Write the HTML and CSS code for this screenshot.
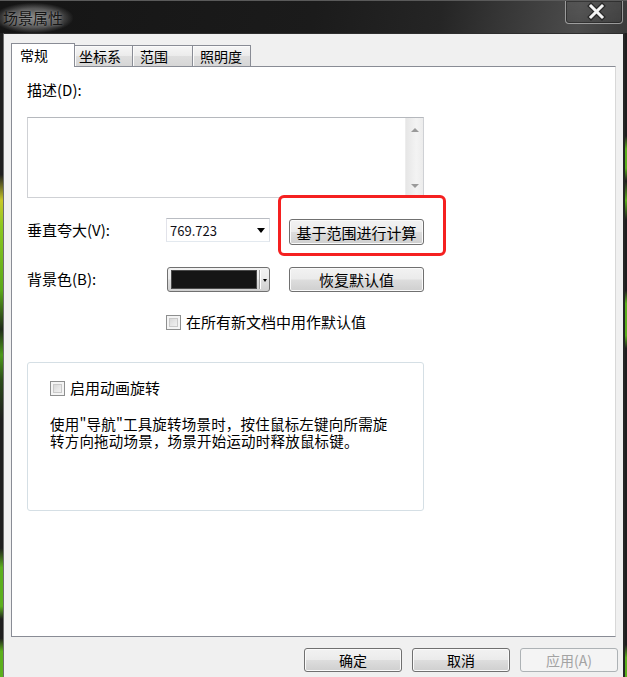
FILE: index.html
```html
<!DOCTYPE html>
<html lang="zh-CN">
<head>
<meta charset="utf-8">
<title>场景属性</title>
<link rel="stylesheet" href="styles.css">
</head>
<body>
<div class="window">
  <div class="titlebar">
    <span class="title">场景属性</span>
    <div class="close">
      <svg width="58" height="23" viewBox="0 0 58 23">
        <path d="M25 5 L36 16 M36 5 L25 16" stroke="#2a2a2a" stroke-width="5.5" stroke-linecap="square"/>
        <path d="M25 5 L36 16 M36 5 L25 16" stroke="#f4f4f4" stroke-width="3" stroke-linecap="square"/>
      </svg>
    </div>
  </div>
  <div class="main">
    <div class="edge-left"></div>
    <div class="client">
      <div class="tabs">
        <div class="tab active">常规</div>
        <div class="tab t2">坐标系</div>
        <div class="tab t3">范围</div>
        <div class="tab t4">照明度</div>
      </div>
      <div class="panel">
        <div class="label desc">描述(D):</div>
        <div class="textarea">
          <div class="scroll"><span class="up"></span><span class="down"></span></div>
        </div>
        <div class="row row1">
          <div class="label">垂直夸大(V):</div>
          <div class="combo"><span class="value">769.723</span><span class="arrow"></span></div>
          <div class="btn-wrap first">
            <div class="btn tall">基于范围进行计算</div>
            <div class="highlight"></div>
          </div>
        </div>
        <div class="row row2">
          <div class="label">背景色(B):</div>
          <div class="colorcombo"><span class="swatch"></span><span class="sep"></span><span class="mini-arrow"></span></div>
          <div class="btn-wrap">
            <div class="btn">恢复默认值</div>
          </div>
        </div>
        <div class="check row3"><span class="cb"></span><span>在所有新文档中用作默认值</span></div>
        <div class="group">
          <div class="check"><span class="cb"></span><span>启用动画旋转</span></div>
          <div class="hint">
            <div class="hint-line">使用"导航"工具旋转场景时，按住鼠标左键向所需旋</div>
            <div class="hint-line">转方向拖动场景，场景开始运动时释放鼠标键。</div>
          </div>
        </div>
      </div>
      <div class="footer">
        <div class="fbtn">确定</div>
        <div class="fbtn">取消</div>
        <div class="fbtn disabled">应用(A)</div>
      </div>
    </div>
    <div class="edge-right"></div>
  </div>
</div>
</body>
</html>
```

FILE: styles.css
```css
* { box-sizing: border-box; }
html, body { margin: 0; padding: 0; }
body {
  width: 627px;
  height: 677px;
  overflow: hidden;
  background: #1e1e1e;
  font-family: "Noto Sans CJK SC", "Noto Sans", sans-serif;
  color: #000;
}
.window { display: flex; flex-direction: column; height: 677px; }

.titlebar {
  height: 33px;
  flex: none;
  display: flex;
  align-items: flex-start;
  border-top: 1px solid #5a5a5a;
  background: linear-gradient(100deg, #151515 0%, #1b1b1b 50%, #252525 70%, #3a3a3a 82%, #4c4c4c 92%, #3a3a3a 100%);
}
.title {
  margin: 2px 0 0 -6px;
  padding: 5px 10px 5px 9px;
  font-size: 15px;
  line-height: 20px;
  color: #151515;
  background: radial-gradient(ellipse at center, rgba(170,170,170,.75) 0%, rgba(140,140,140,.55) 45%, rgba(100,100,100,0) 72%);
  text-shadow: 0 0 3px rgba(255,255,255,.35);
}
.close {
  margin-left: auto;
  margin-right: 4px;
  width: 58px;
  height: 23px;
  border: 1px solid rgba(190,190,190,.7);
  border-top: none;
  border-radius: 0 0 4px 4px;
  background: linear-gradient(rgba(255,255,255,.06), rgba(255,255,255,.02));
  box-shadow: inset 0 0 0 1px rgba(0,0,0,.35);
}
.close svg { display: block; }

.main { flex: 1; display: flex; min-height: 0; }
.edge-left {
  width: 3px;
  background: linear-gradient(#1e1e1e 0%, #1e1e1e 22%, #c8c828 26%, #8cc820 30%, #5aa818 40%, #1e2a18 46%, #4c9a1a 50%, #2a4a18 54%, #1e1e1e 60%, #1e1e1e 80%, #5cb01c 83%, #5cb01c 89%, #1e1e1e 91%, #1e1e1e 94%, #5cb01c 96%);
}
.edge-right {
  width: 2px;
  background: linear-gradient(#1e1e1e 0%, #1e1e1e 16%, #5cb01c 18%, #5cb01c 21%, #1e1e1e 23%, #5cb01c 26%, #1e1e1e 29%, #1e1e1e 40%, #5cb01c 42%, #5cb01c 47%, #1e1e1e 49%, #1e1e1e 95%, #5cb01c 97%);
}
.client {
  flex: 1;
  display: flex;
  flex-direction: column;
  background: #f0f0f0;
  border-left: 1px solid #6e6e6e;
  border-right: 2px solid #262626;
  border-top: 1px solid #2e2e2e;
  padding: 9px 7px 5px 7px;
}

.tabs {
  display: flex;
  align-items: flex-end;
  height: 24px;
  margin-bottom: -1px;
  position: relative;
  z-index: 1;
  flex: none;
}
.tab {
  height: 21px;
  margin-bottom: 1px;
  margin-left: -1px;
  border: 1px solid #898c95;
  border-bottom: none;
  padding-left: 6px;
  font-size: 14px;
  line-height: 20px;
  white-space: nowrap;
  background: linear-gradient(#f6f6f6, #ebebeb 50%, #dedede 52%, #d6d6d6);
  box-shadow: inset 1px 1px 0 #fbfbfb;
}
.tab.active {
  width: 64px;
  height: 24px;
  margin: 0;
  padding-left: 8px;
  line-height: 22px;
  background: #fff;
  box-shadow: none;
}
.t2 { width: 59px; padding-left: 4px; }
.t3 { width: 61px; padding-left: 7px; }
.t4 { width: 59px; padding-left: 7px; }

.panel {
  flex: 1;
  background: #fff;
  border: 1px solid #898c95;
  border-right-color: #d8d8d8;
  padding: 13px 0 0 15px;
  display: flex;
  flex-direction: column;
  align-items: flex-start;
}
.label { font-size: 15px; line-height: 20px; white-space: nowrap; }
.desc { height: 20px; }

.textarea {
  margin-top: 17px;
  width: 397px;
  height: 81px;
  border: 1px solid #cfd1d5;
  border-top-color: #b5b8bd;
  display: flex;
  justify-content: flex-end;
}
.scroll {
  width: 18px;
  height: 100%;
  background: linear-gradient(to right, #e6e6e6, #f3f3f3 60%, #ececec);
  border-left: 1px solid #ededed;
  display: flex;
  flex-direction: column;
  justify-content: space-between;
  align-items: center;
  padding: 10px 0 9px;
}
.up { width: 0; height: 0; border: solid transparent; border-width: 0 4px 4px; border-bottom-color: #9a9a9a; }
.down { width: 0; height: 0; border: solid transparent; border-width: 4px 4px 0; border-top-color: #9a9a9a; }

.row { display: flex; align-items: flex-start; }
.row .label { width: 139px; line-height: 24px; }
.row1 { margin-top: 20px; }
.row2 { margin-top: 22px; }

.combo {
  width: 104px;
  height: 24px;
  border: 1px solid #abadb3;
  border-color: #b9bcc2 #dbdfe6 #e3e9ef #e2e3ea;
  background: #fff;
  display: flex;
  align-items: center;
  padding-left: 3px;
  font-size: 13px;
  color: #101018;
}
.combo .arrow {
  margin-left: auto;
  margin-right: 4px;
  width: 0;
  height: 0;
  border: solid transparent;
  border-width: 5px 4.5px 0;
  border-top-color: #000;
}

.btn-wrap { position: relative; margin-left: 19px; }
.btn-wrap.first { margin-top: 1px; }
.btn, .fbtn {
  display: flex;
  align-items: center;
  justify-content: center;
  border: 1px solid #707070;
  border-radius: 3px;
  background: linear-gradient(#f2f2f2 0%, #ebebeb 48%, #dddddd 52%, #cfcfcf 100%);
  box-shadow: inset 0 0 0 1px #fafafa;
  white-space: nowrap;
  color: #000;
}
.btn { width: 135px; height: 25px; font-size: 15px; }
.btn.tall { height: 26px; }
.highlight {
  position: absolute;
  left: -11px;
  top: -24px;
  width: 168px;
  height: 61px;
  border: 3px solid #f52020;
  border-radius: 6px;
}

.colorcombo {
  width: 103px;
  height: 25px;
  margin-left: 1px;
  border: 1px solid #707070;
  border-radius: 3px;
  background: linear-gradient(#f2f2f2, #ebebeb 48%, #dddddd 52%, #cfcfcf);
  padding: 2px 0 0 3px;
  display: flex;
  align-items: flex-start;
}
.swatch { width: 86px; height: 19px; background: #151515; border: 1px solid #4a4a4a; }
.sep { width: 1px; height: 19px; margin-left: 2px; background: #a0a0a0; box-shadow: 1px 0 0 #fff; }
.mini-arrow {
  margin: 9px 0 0 3px;
  width: 0;
  height: 0;
  border: solid transparent;
  border-width: 3px 2.5px 0;
  border-top-color: #000;
}

.check { display: flex; align-items: center; gap: 5px; font-size: 15px; line-height: 16px; white-space: nowrap; }
.row3 { margin: 22px 0 0 139px; }
.cb {
  width: 15px;
  height: 15px;
  flex: none;
  border: 1px solid #8e8f8f;
  background: linear-gradient(135deg, #cdcdcd 0%, #e8e8e8 55%, #f7f7f7 100%);
  box-shadow: inset 0 0 0 2px #f4f4f4, inset 0 0 0 3px #c9c9c9;
}

.group {
  margin-top: 32px;
  width: 397px;
  height: 149px;
  border: 1px solid #d5dfe5;
  border-radius: 3px;
  padding: 17px 0 0 22px;
}
.hint { margin-top: 19px; }
.hint-line {
  height: 17px;
  font-size: 14.5px;
  line-height: 17px;
  letter-spacing: 0.2px;
  white-space: nowrap;
}

.footer {
  flex: none;
  display: flex;
  justify-content: flex-end;
  gap: 10px;
  margin: 11px -2px 0 0;
}
.fbtn { width: 98px; height: 24px; font-size: 14px; }
.fbtn.disabled {
  color: #a3a3a3;
  border-color: #adb2b5;
  background: #f4f4f4;
  box-shadow: none;
}
```
